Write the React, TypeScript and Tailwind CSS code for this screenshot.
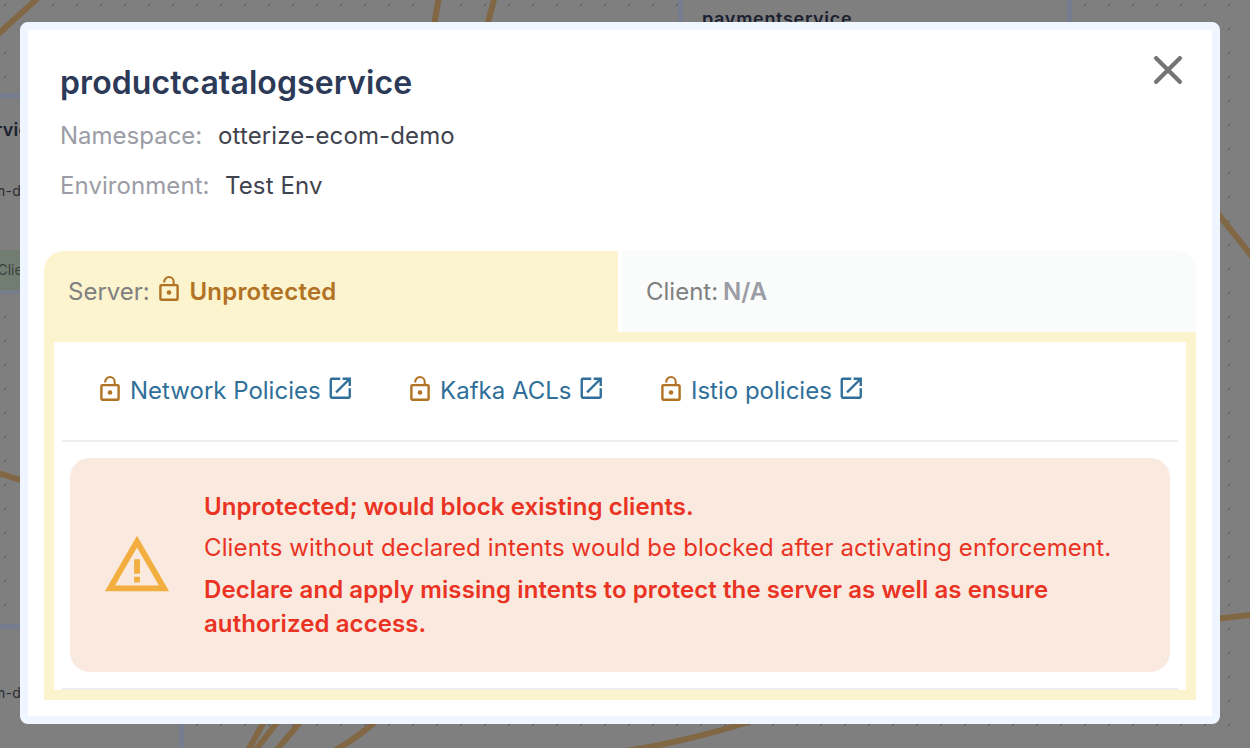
import React from "react";
import { MdOpenInNew, MdWarningAmber } from "react-icons/md";

function OpenLock() {
  return (
    <svg width="20" height="26" viewBox="0 0 20 26" fill="none" className="shrink-0 text-[#b27224]">
      <rect x="1.4" y="9.1" width="17.2" height="14.6" rx="1" stroke="currentColor" strokeWidth="2.4" />
      <path d="M5.2 6.4V5.8a4.75 4.75 0 0 1 9.5 0V9" stroke="currentColor" strokeWidth="2.1" />
      <circle cx="10" cy="16.5" r="2.3" fill="currentColor" />
    </svg>
  );
}

function CloseIcon() {
  return (
    <svg width="28" height="28" viewBox="0 0 28 28" className="text-[#757575]">
      <path d="M2.2 2.2L25.8 25.8M25.8 2.2L2.2 25.8" stroke="currentColor" strokeWidth="4.3" strokeLinecap="round" />
    </svg>
  );
}

function PolicyLink({ label }: { label: string }) {
  return (
    <a className="flex items-center text-[#2f6f99]">
      <span className="mb-1"><OpenLock /></span>
      <span className="ml-[10px] text-[24px] leading-8 whitespace-nowrap">{label}</span>
      <MdOpenInNew size={28.5} className="mb-[5px] ml-[5px] shrink-0" />
    </a>
  );
}

function Graph() {
  return (
    <svg width="1250" height="748" viewBox="0 0 1250 748" className="absolute inset-0 font-['Inter',sans-serif]">
      <defs>
        <pattern id="dots" width="24" height="24" patternUnits="userSpaceOnUse">
          <rect x="4" y="4" width="2" height="2" fill="#686b6b" />
        </pattern>
      </defs>
      <rect width="1250" height="748" fill="#7f7f7f" />
      <rect width="1250" height="748" fill="url(#dots)" />
      <g fill="#7f7f7f" stroke="#757d8e" strokeWidth="5">
        <rect x="-200" y="95.5" width="383" height="196" />
        <rect x="-200" y="626.5" width="381.5" height="200" />
        <rect x="680.5" y="-100" width="389" height="200" />
      </g>
      <rect x="-10" y="250" width="100" height="40" fill="#717d71" />
      <g fill="none" stroke="#826745" strokeWidth="6">
        <path d="M-4 36L40 -4" />
        <path d="M434 26L439 -4M487 26L495 -4" />
        <path d="M1215 210L1254 259" />
        <path d="M-2 473L30 483" />
        <path d="M1215 619L1254 614.5" />
        <path d="M265 720L247 752M279 720L254 752M302 720L275 752M377 720Q355 740 330 753M755 720Q690 741 620 752" />
      </g>
      <g fill="#1a2030">
        <text x="702" y="25" fontSize="18" fontWeight="600" letterSpacing="0.7">paymentservice</text>
        <text x="-5" y="136" fontSize="18" fontWeight="600" letterSpacing="0.3">rvice</text>
      </g>
      <g fill="#292c32" fontSize="14">
        <text x="-7" y="196" letterSpacing="0.3">m-demo</text>
        <text x="-7" y="698" letterSpacing="0.3">m-demo</text>
        <text x="-2.5" y="275" fill="#3c403c">Client</text>
      </g>
    </svg>
  );
}

export default function App() {
  return (
    <div className="relative h-[748px] w-[1250px] overflow-hidden font-['Inter',sans-serif]">
      <Graph />
      <div className="relative mt-[22px] ml-5 flex h-[702px] w-[1200px] flex-col rounded-lg border-8 border-[#f0f6ff] bg-white px-4">
        <header className="flex h-[221px] justify-between pt-[33px] pr-[14px] pl-4">
          <div className="flex flex-col">
            <h1 className="text-[32px] leading-10 font-semibold tracking-[0.1px] text-[#2c3a58]">productcatalogservice</h1>
            <div className="mt-[17px] flex text-[24px] leading-8">
              <span className="w-[158px] text-[#9b9ca5]">Namespace:</span>
              <span className="tracking-[0.12px] text-[#3f434d]">otterize-ecom-demo</span>
            </div>
            <div className="mt-[18px] flex text-[24px] leading-8">
              <span className="w-[165px] tracking-[0.07px] text-[#9b9ca5]">Environment:</span>
              <span className="tracking-[0.12px] text-[#3f434d]">Test Env</span>
            </div>
          </div>
          <span className="-mt-[7px]"><CloseIcon /></span>
        </header>
        <div className="flex h-[81px] gap-1 text-[24px] leading-8">
          <div className="flex w-[574px] items-center rounded-tl-[20px] bg-[#fcf3cf] pl-6">
            <span className="w-[91px] text-[#808080]">Server:</span>
            <span className="-mt-[5px]"><OpenLock /></span>
            <span className="ml-[10.5px] font-semibold tracking-[0.2px] text-[#b27224]">Unprotected</span>
          </div>
          <div className="flex flex-1 items-center rounded-tr-[20px] bg-[#fafcfb] pl-6">
            <span className="w-[77px] text-[#808080]">Client:</span>
            <span className="font-semibold text-[#9b9ca5]">N/A</span>
          </div>
        </div>
        <div className="flex h-[368px] flex-col border-[10px] border-[#fcf3cf] px-2">
          <div className="flex h-[100px] items-center gap-[56px] border-b-2 border-[#ededed] pl-[38px]">
            <PolicyLink label="Network Policies" />
            <PolicyLink label="Kafka ACLs" />
            <PolicyLink label="Istio policies" />
          </div>
          <div className="mx-2 my-4 flex h-[214px] items-center rounded-[20px] bg-[#f9e9df] pl-8">
            <MdWarningAmber size={70} className="shrink-0 text-[#f2ae3f]" />
            <div className="ml-8 text-[24px] leading-[34px] text-[#ea3323]">
              <p className="font-semibold tracking-[0.08px]">Unprotected; would block existing clients.</p>
              <p className="mt-[7px] tracking-[0.12px] whitespace-nowrap">Clients without declared intents would be blocked after activating enforcement.</p>
              <p className="mt-2 font-semibold tracking-[0.09px]">Declare and apply missing intents to protect the server as well as ensure<br />authorized access.</p>
            </div>
          </div>
          <div className="h-[2px] shrink-0 bg-[#ededed]" />
        </div>
      </div>
    </div>
  );
}
